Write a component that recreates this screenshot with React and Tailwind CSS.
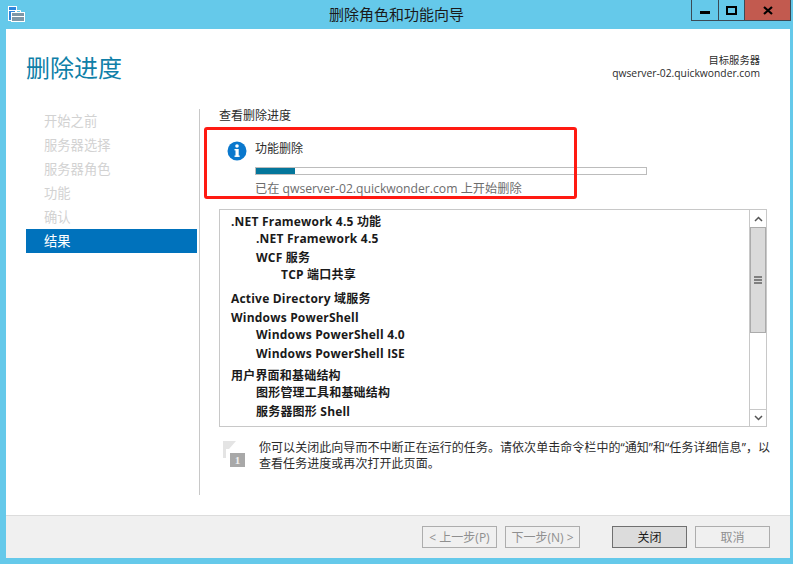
import React from "react";

const FONT = "font-['Open_Sans','Noto_Sans_CJK_SC',sans-serif]";

const navItems = ["开始之前", "服务器选择", "服务器角色", "功能", "确认", "结果"];

const rows = [
  { text: ".NET Framework 4.5 功能", cls: "pl-[11px]" },
  { text: ".NET Framework 4.5", cls: "pl-[36px]" },
  { text: "WCF 服务", cls: "pl-[36px] mt-[2px]" },
  { text: "TCP 端口共享", cls: "pl-[61px]" },
  { text: "Active Directory 域服务", cls: "pl-[11px] mt-[7px]" },
  { text: "Windows PowerShell", cls: "pl-[11px] mt-[2px]" },
  { text: "Windows PowerShell 4.0", cls: "pl-[36px]" },
  { text: "Windows PowerShell ISE", cls: "pl-[36px] mt-[2px]" },
  { text: "用户界面和基础结构", cls: "pl-[11px] mt-[5px]" },
  { text: "图形管理工具和基础结构", cls: "pl-[36px]" },
  { text: "服务器图形 Shell", cls: "pl-[36px] mt-[2px]" },
];

function TitleBar() {
  return (
    <div className="relative flex h-[29px] shrink-0 items-start">
      <svg className="ml-[8px] mt-[6px]" width="17" height="16" viewBox="0 0 17 16">
        <rect x="0.5" y="0.5" width="8" height="14" fill="#2f86dc" stroke="#fff" />
        <rect x="1" y="4" width="7" height="1" fill="#fff" />
        <rect x="3.5" y="6.5" width="13" height="9" fill="#7d97a8" stroke="#fff" />
        <path d="M7.5 6.5V4.5h5v2M3.5 10.5h13" fill="none" stroke="#fff" />
      </svg>
      <div className="absolute left-0 right-0 top-[5px] text-center text-[15px] leading-[19px] text-[#1a1a1a]">
        删除角色和功能向导
      </div>
      <div className="absolute right-[2px] top-0 flex h-[21px] border border-t-0 border-[#3b4a55]">
        <div className="flex w-[27px] items-center justify-center border-r border-[#3b4a55]">
          <div className="mt-[5px] h-[3px] w-[10px] bg-black" />
        </div>
        <div className="flex w-[26px] items-center justify-center border-r border-[#3b4a55]">
          <div className="h-[9px] w-[11px] border-2 border-black" />
        </div>
        <div className="flex w-[45px] items-center justify-center bg-[#c25a4f]">
          <svg width="10" height="9" viewBox="0 0 10 9">
            <path d="M1 1l8 7M9 1L1 8" stroke="#000" strokeWidth="2.2" />
          </svg>
        </div>
      </div>
    </div>
  );
}

function Sidebar() {
  return (
    <div className="w-[192px] shrink-0 pl-[20px]">
      {navItems.map((item) => {
        const active = item === "结果";
        return (
          <div
            key={item}
            className={
              active
                ? "flex h-[24px] w-[171px] items-center bg-[#0072bc] pl-[18px] pt-[2px] text-[13.3px] text-white"
                : "flex h-[24px] w-[171px] items-center pl-[18px] pt-[2px] text-[13.3px] text-[#d2d2d2]"
            }
          >
            {item}
          </div>
        );
      })}
    </div>
  );
}

function ListBox() {
  return (
    <div className="mt-[11px] flex h-[218px] w-[548px] border border-[#c8c8c8] bg-white">
      <div className="flex-1 pt-[3px] text-[12px] font-bold leading-[17px] tracking-[0.2px] text-[#1a1a1a]">
        {rows.map((row) => (
          <div key={row.text} className={row.cls}>
            {row.text}
          </div>
        ))}
      </div>
      <div className="flex w-[17px] flex-col border-l border-[#c8c8c8]">
        <div className="flex h-[17px] items-center justify-center">
          <svg width="9" height="6" viewBox="0 0 9 6">
            <path d="M1 5l3.5-3.5L8 5" fill="none" stroke="#555" strokeWidth="1.5" />
          </svg>
        </div>
        <div className="flex h-[106px] items-center justify-center border border-[#ababab] bg-[#dadada]">
          <div className="flex w-[8px] flex-col gap-[1px]">
            <div className="h-[2px] bg-[#7f7f7f]" />
            <div className="h-[2px] bg-[#7f7f7f]" />
            <div className="h-[2px] bg-[#7f7f7f]" />
          </div>
        </div>
        <div className="flex-1" />
        <div className="flex h-[17px] items-center justify-center border-t border-[#c8c8c8]">
          <svg width="9" height="6" viewBox="0 0 9 6">
            <path d="M1 1l3.5 3.5L8 1" fill="none" stroke="#555" strokeWidth="1.5" />
          </svg>
        </div>
      </div>
    </div>
  );
}

function Content() {
  return (
    <div className="ml-[1px] h-[386px] w-[568px] border-l border-[#c8c8c8] pl-[19px]">
      <div className="text-[12px] leading-[14px] text-[#2b2b2b]">查看删除进度</div>
      <div className="mt-[5px] h-[70px]">
        <div className="flex items-start pl-[8px] pt-[13px]">
          <svg width="20" height="20" viewBox="0 0 20 20">
            <circle cx="10" cy="10" r="9.5" fill="#0a78cd" />
            <rect x="8.5" y="8" width="3.2" height="7.5" fill="#fff" />
            <rect x="7.5" y="8" width="3" height="1.4" fill="#fff" />
            <rect x="7.5" y="14.5" width="5.2" height="1.4" fill="#fff" />
            <circle cx="10" cy="5" r="1.8" fill="#fff" />
          </svg>
          <div className="ml-[8px] w-[392px]">
            <div className="text-[12px] leading-[16px] text-[#2b2b2b]">功能删除</div>
            <div className="mt-[10px] h-[8px] border border-[#bcbcbc] bg-white">
              <div className="h-full w-[10%] bg-[#04769b]" />
            </div>
            <div className="mt-[6px] whitespace-nowrap text-[12.2px] leading-[16px] text-[#6d6d6d]">
              已在 qwserver-02.quickwonder.com 上开始删除
            </div>
          </div>
        </div>
      </div>
      <ListBox />
      <div className="mt-[13px] flex">
        <svg className="ml-[4px] shrink-0" width="23" height="27" viewBox="0 0 23 27">
          <path d="M0 1h13L6 9H3v9H0z" fill="#e4e4e4" />
          <rect x="7" y="13" width="15" height="14" fill="#a8a8a8" />
          <text x="14.5" y="24" textAnchor="middle" fontSize="11" fontWeight="bold" fill="#efefef" fontFamily="Liberation Serif, serif">1</text>
        </svg>
        <div className="ml-[13px] shrink-0 whitespace-pre text-[12px] leading-[16px] tracking-[0.05px] text-[#2b2b2b]">
          {"你可以关闭此向导而不中断正在运行的任务。请依次单击命令栏中的“通知”和“任务详细信息”，以\n查看任务进度或再次打开此页面。"}
        </div>
      </div>
    </div>
  );
}

function WizardButton({ label, tone }) {
  const styles = {
    disabled: "border-[#adadad] bg-[#f0f0f0] text-[#8f8f8f]",
    primary: "border-[#707070] bg-[#dcdcdc] text-[#1a1a1a]",
  };
  return (
    <div className={`flex h-[22px] w-[75px] items-center justify-center border pt-[1px] text-[12px] ${styles[tone]}`}>
      {label}
    </div>
  );
}

export default function App() {
  return (
    <div className={`relative flex h-[564px] w-[793px] flex-col overflow-hidden bg-[#65c9ea] ${FONT}`}>
      <TitleBar />
      <div className="ml-[6px] mr-[3px] flex flex-1 flex-col bg-white">
        <div className="flex h-[80px] shrink-0 justify-between pr-[30px]">
          <div className="pl-[20px] pt-[21px] text-[24px] leading-[36px] text-[#0f7fa8]">删除进度</div>
          <div className="pt-[25px] text-right text-[10.3px] leading-[13px] text-[#2b2b2b]">
            <div>目标服务器</div>
            <div>qwserver-02.quickwonder.com</div>
          </div>
        </div>
        <div className="flex flex-1">
          <Sidebar />
          <Content />
        </div>
        <div className="flex h-[43px] shrink-0 items-start justify-end gap-[8px] border-t border-[#dcdcdc] bg-[#f0f0f0] pr-[20px] pt-[10px]">
          <WizardButton label="< 上一步(P)" tone="disabled" />
          <WizardButton label="下一步(N) >" tone="disabled" />
          <div className="w-[16px]" />
          <WizardButton label="关闭" tone="primary" />
          <WizardButton label="取消" tone="disabled" />
        </div>
      </div>
      <div className="pointer-events-none absolute left-[204px] top-[127px] h-[72px] w-[373px] rounded-[3px] border-[3px] border-[#ff1a12]" />
      <div className="h-[6px] shrink-0" />
    </div>
  );
}
